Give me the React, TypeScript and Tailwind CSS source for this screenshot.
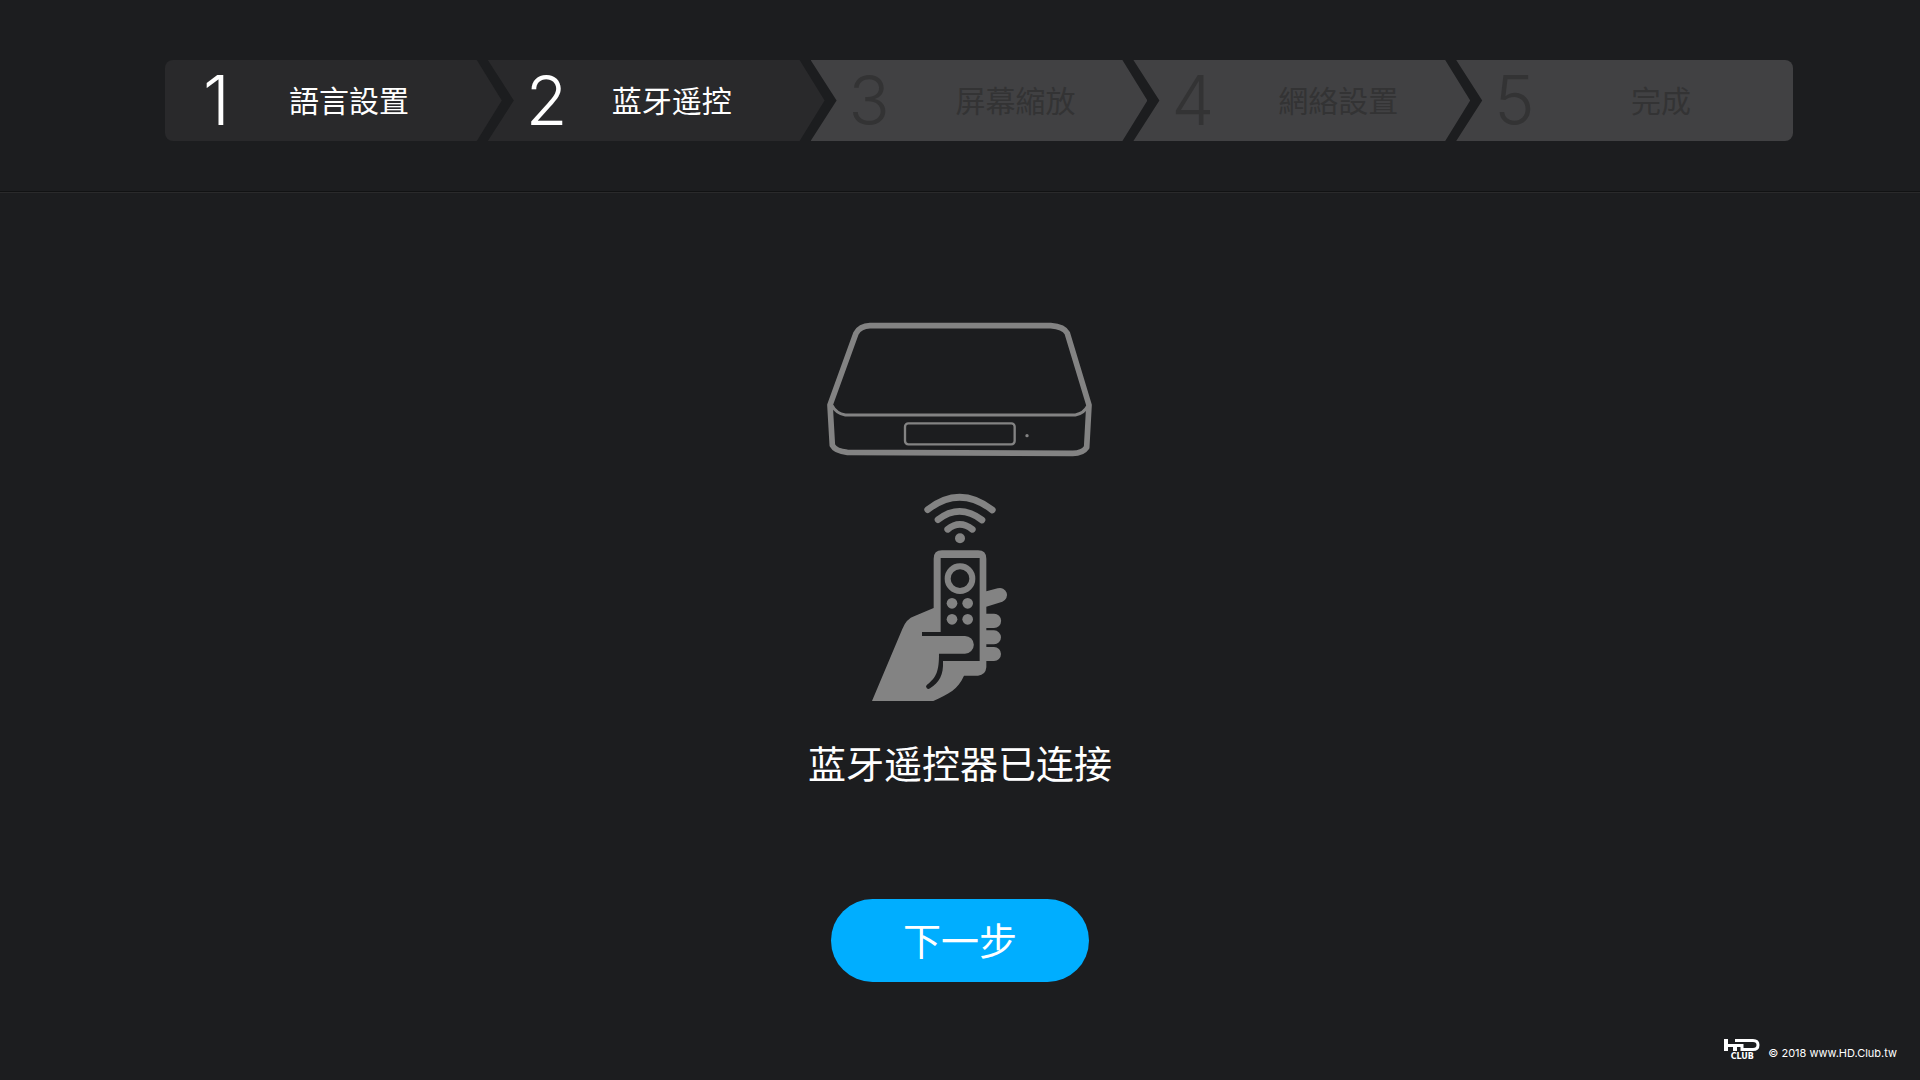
import clsx from "clsx";

const steps = [
  { label: "語言設置", reached: true },
  { label: "蓝牙遥控", reached: true },
  { label: "屏幕縮放", reached: false },
  { label: "網絡設置", reached: false },
  { label: "完成", reached: false },
];

function StepBar() {
  return (
    <ol className="flex h-[81px]">
      {steps.map((step, index) => (
        <li
          key={step.label}
          aria-current={index === 1 ? "step" : undefined}
          className={clsx(
            "flex-1",
            step.reached ? "bg-[#29292b] text-white" : "bg-[#414143] text-[#333334]",
            index === 0 && "rounded-l-lg [clip-path:polygon(0_0,calc(100%-25px)_0,100%_50%,calc(100%-25px)_100%,0_100%)]",
            index > 0 && "-ml-[14px]",
            index > 0 && index < steps.length - 1 &&
              "[clip-path:polygon(0_0,calc(100%-25px)_0,100%_50%,calc(100%-25px)_100%,0_100%,26px_50%)]",
            index === steps.length - 1 && "rounded-r-lg [clip-path:polygon(0_0,100%_0,100%_100%,0_100%,26px_50%)]"
          )}
        >
          <div className={clsx("flex h-full items-center pb-0.5 pl-[38px]", step.reached ? "pr-[59px]" : "pr-[17px]")}>
            <span className="w-[52px] shrink-0 font-['Inter',sans-serif] text-[68px] leading-none font-[260]">
              {index + 1}
            </span>
            <span className="flex-1 pb-0.5 text-center text-[30px] leading-10 whitespace-nowrap">{step.label}</span>
          </div>
        </li>
      ))}
    </ol>
  );
}

function SetTopBox() {
  return (
    <svg viewBox="45 36 810 408" className="h-[136px] w-[270px]" fill="none" stroke="#838383" aria-hidden="true">
      <path
        strokeWidth="17"
        strokeLinejoin="round"
        d="M180 47H722Q762 50 772 70L837 285L830 412Q818 430 788 430L112 427Q76 424 67 406L60 285L138 70Q150 48 180 47Z"
      />
      <path strokeWidth="9" d="M66 286Q78 310 106 315H796Q822 310 833 288" />
      <rect strokeWidth="7" x="285" y="340" width="329" height="63" rx="10" />
      <circle cx="651" cy="377" r="5" fill="#838383" stroke="none" />
    </svg>
  );
}

function RemoteInHand() {
  return (
    <svg viewBox="60 36 540 630" className="h-[210px] w-[180px]" fill="#838383" aria-hidden="true">
      <g fill="none" stroke="#838383" strokeWidth="20" strokeLinecap="round">
        <path d="M233 89Q329 14 427 90" />
        <path d="M264 119Q329 69 396 120" />
        <path d="M293 148Q329 118 367 148" />
      </g>
      <circle cx="330" cy="175" r="15" />
      {/* hand and remote body */}
      <path d="M251 384V236Q251 211 276 211H384Q409 211 409 236V334L443 325A21 21 0 0 1 457 365L409 380V401H432A20 20 0 0 1 432 444H409V451H432A20 20 0 0 1 432 493H409V501H432A20 20 0 0 1 432 543H409V562Q407 585 384 587H342C324 628 296 642 250 663H66L157 447Q169 416 194 408Z" />
      {/* screen cut-out and the fold of the palm */}
      <path
        fill="#1c1d1f"
        d="M272 234H389V543H279C281 586 268 606 240 625A7 7 0 0 1 231 614C260 592 267 572 267 521H345A26 26 0 0 0 345 468H216V456H272Z"
      />
      <circle cx="330" cy="296" r="37" fill="none" stroke="#838383" strokeWidth="18" />
      <circle cx="306" cy="370" r="16" />
      <circle cx="353" cy="370" r="16" />
      <circle cx="306" cy="418" r="16" />
      <circle cx="353" cy="418" r="16" />
    </svg>
  );
}

function Watermark() {
  return (
    <footer className="flex items-end justify-end gap-2 pr-[23px] pb-[17px] text-white">
      <span className="flex flex-col items-center">
        <svg viewBox="0 0 36 12" className="h-3 w-9" fill="none" stroke="currentColor" aria-hidden="true">
          <path strokeWidth="4" d="M2 0V12M11 6V12" />
          <path strokeWidth="3" d="M4 6.500H18V10.500H29Q34 10.500 34 6T29 1.500H11" />
        </svg>
        <span className="font-['DejaVu_Sans',sans-serif] text-[8px] leading-3 font-bold">CLUB</span>
      </span>
      <span className="font-['Inter',sans-serif] text-[11px] leading-5">© 2018 www.HD.Club.tw</span>
    </footer>
  );
}

export default function App() {
  return (
    <div className="flex min-h-screen flex-col bg-[#1c1d1f] font-['Noto_Sans_CJK_SC',sans-serif] text-white">
      <header className="border-b border-[#2a2a2b] pt-[60px]">
        <div className="border-b border-[#111213] pr-[127px] pb-[50px] pl-[165px]">
          <StepBar />
        </div>
      </header>

      <main className="flex flex-1 flex-col items-center pt-[129px]">
        <SetTopBox />
        <div className="mt-[34px]">
          <RemoteInHand />
        </div>
        <h1 className="mt-8 text-[38px] leading-[56px]">蓝牙遥控器已连接</h1>
        <button type="button" className="mt-[109px] h-[83px] w-[258px] rounded-full bg-[#00aeff] pb-1 text-[38px]">
          下一步
        </button>
      </main>

      <Watermark />
    </div>
  );
}
